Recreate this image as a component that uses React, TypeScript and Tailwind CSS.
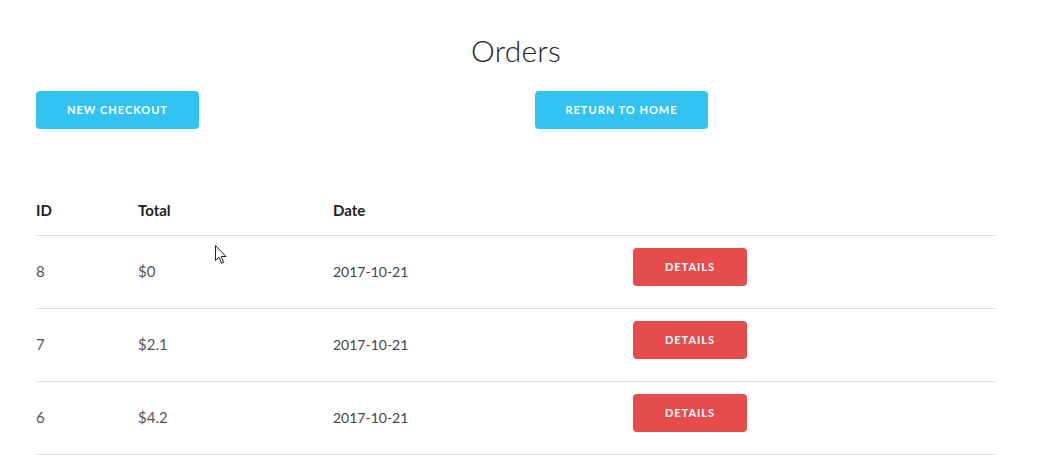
const orders = [
  { id: 8, total: '$0', date: '2017-10-21' },
  { id: 7, total: '$2.1', date: '2017-10-21' },
  { id: 6, total: '$4.2', date: '2017-10-21' },
];

export default function App() {
  return (
    <div className="relative min-h-[462px] bg-white text-[#222] font-['Lato','Open_Sans',sans-serif]">
      <div className="ml-[36px] w-[960px]">
        {/* Title */}
        <h1 className="pt-[28px] text-center text-[30px] font-light leading-[44px] tracking-[0.2px]">Orders</h1>

        {/* Action buttons */}
        <div className="mt-[19px] grid grid-cols-2 gap-x-[38px]">
          <div>
            <button className="h-[38px] w-[163px] rounded-[4px] bg-[#33c3f0] text-[11px] font-bold uppercase tracking-[1px] text-white">
              New Checkout
            </button>
          </div>
          <div>
            <button className="h-[38px] w-[173px] rounded-[4px] bg-[#33c3f0] text-[11px] font-bold uppercase tracking-[1px] text-white">
              Return to Home
            </button>
          </div>
        </div>

        {/* Orders table */}
        <div className="mt-[58px]">
          <div className="flex h-[49px] items-center border-b border-[#e1e1e1] pb-[2px] text-[15px] font-bold text-[#222]">
            <div className="w-[102px]">ID</div>
            <div className="w-[195px]">Total</div>
            <div className="w-[300px]">Date</div>
          </div>
          {orders.map((o) => (
            <div key={o.id} className="flex h-[73px] items-start border-b border-[#e1e1e1] pt-[12px]">
              <div className="w-[102px] pt-[13px] text-[15px] leading-[20px] text-[#555]">{o.id}</div>
              <div className="w-[195px] pt-[13px] text-[15px] leading-[20px] text-[#555]">{o.total}</div>
              <div className="w-[300px] pt-[14px] text-[14px] leading-[20px] text-[#444]">{o.date}</div>
              <button className="h-[38px] w-[114px] rounded-[4px] bg-[#e64c4c] text-[11px] font-bold uppercase tracking-[1px] text-white">
                Details
              </button>
            </div>
          ))}
        </div>
      </div>

      {/* Mouse pointer */}
      <svg className="absolute left-[215px] top-[245px]" width="13" height="20" viewBox="0 0 13 20">
        <path d="M0.5 0.5 L0.5 15.5 L4 12.2 L6.6 18.3 L8.7 17.4 L6.2 11.5 L11 11.5 Z" fill="#fff" stroke="#222" strokeWidth="1" strokeLinejoin="round" />
      </svg>
    </div>
  );
}
